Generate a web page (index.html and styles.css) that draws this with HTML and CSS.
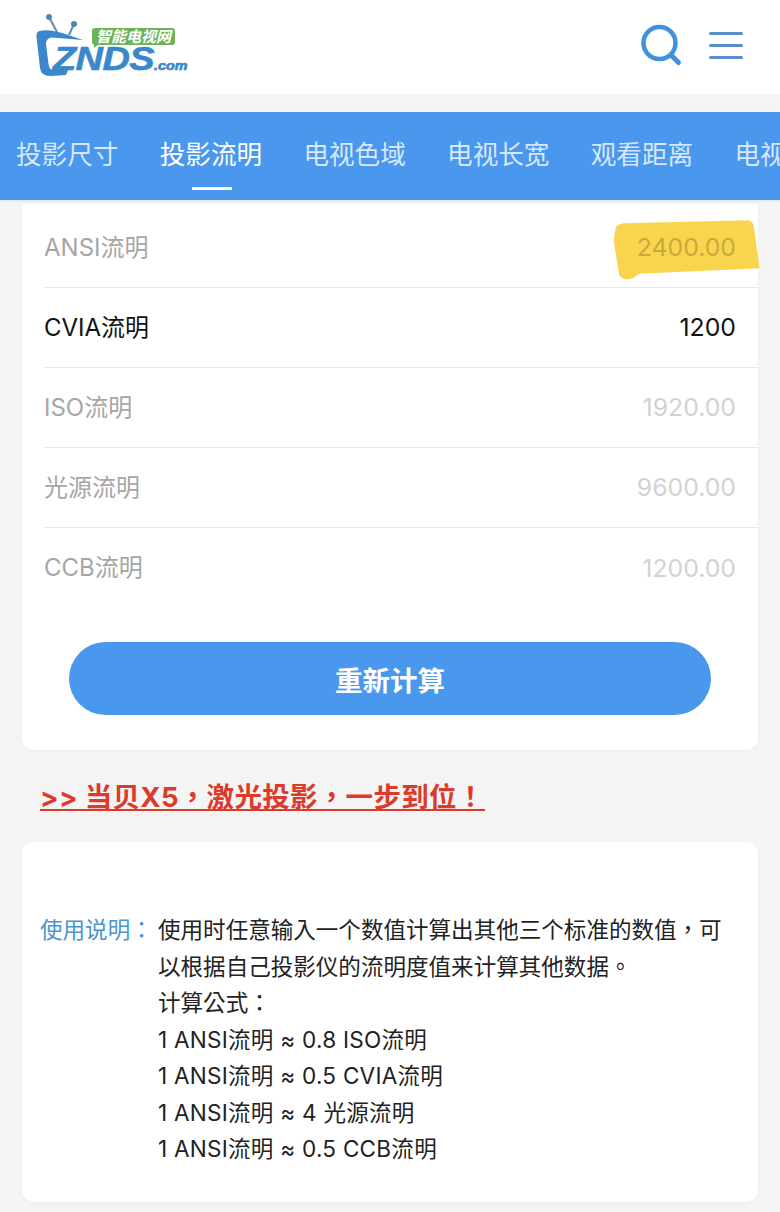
FILE: index.html
```html
<!DOCTYPE html>
<html lang="zh-CN">
<head>
    <meta charset="UTF-8"/>
    <title>投影流明换算</title>
    <link rel="stylesheet" href="styles.css">
</head>
<body>
    <header class="header">
        <div class="logo">
            <svg class="logo-tv" width="60" height="70" viewBox="0 0 60 70">
                <path d="M13 3 L21 18 M38 10 L33 21" stroke="#5a8fb5" stroke-width="2" fill="none"/>
                <circle cx="13" cy="3" r="3" fill="#4f86ad"/>
                <circle cx="38" cy="10" r="3" fill="#4f86ad"/>
                <path d="M4 17 Q0 17 0.500 23 L4 54 Q5 62 14 62 L30 61 L32 56 L18 56 Q13 56 12.500 50 L10 30 Q10 24 16 23.500 L47 26 L26 19 Q12 15 4 17 Z" fill="#3a87cb"/>
            </svg>
            <span class="logo-cn">智能电视网</span>
            <span class="logo-en">ZNDS<small>.com</small></span>
        </div>
        <div class="header-icons">
            <svg width="42" height="44" viewBox="0 0 42 44">
                <circle cx="18.500" cy="20" r="16" fill="none" stroke="#3f92dc" stroke-width="4.500"/>
                <path d="M30 32 L37.500 39.500" stroke="#3f92dc" stroke-width="5" stroke-linecap="round"/>
            </svg>
            <div class="menu-icon"><i></i><i></i><i></i></div>
        </div>
    </header>

    <nav class="tabs">
        <a class="tab">投影尺寸</a>
        <a class="tab active">投影流明</a>
        <a class="tab">电视色域</a>
        <a class="tab">电视长宽</a>
        <a class="tab">观看距离</a>
        <a class="tab">电视尺寸</a>
    </nav>

    <section class="card calc">
        <div class="row">
            <span class="row-label">ANSI流明</span>
            <span class="row-value marked">
                <svg class="marker" width="150" height="64" viewBox="156 78 450 192">
                    <path d="M170 110 Q178 98 195 97 L570 88 Q583 92 585 110 L602 232 L240 248 Q222 266 200 265 Q184 262 180 250 L164 150 Z" fill="#f9d54f"/>
                </svg>
                2400.00
            </span>
        </div>
        <div class="row current">
            <span class="row-label">CVIA流明</span>
            <span class="row-value">1200</span>
        </div>
        <div class="row">
            <span class="row-label">ISO流明</span>
            <span class="row-value">1920.00</span>
        </div>
        <div class="row">
            <span class="row-label">光源流明</span>
            <span class="row-value">9600.00</span>
        </div>
        <div class="row last">
            <span class="row-label">CCB流明</span>
            <span class="row-value">1200.00</span>
        </div>
        <button class="btn">重新计算</button>
    </section>

    <a class="promo" lang="zh-TW">&gt;&gt; 当贝X5，激光投影，一步到位！</a>

    <section class="card notes" lang="zh-TW">
        <div class="notes-title">使用说明：</div>
        <div class="notes-body">
            <p>使用时任意输入一个数值计算出其他三个标准的数值，可以根据自己投影仪的流明度值来计算其他数据。</p>
            <p>计算公式：</p>
            <p class="formula">1 ANSI流明 ≈ 0.8 ISO流明</p>
            <p class="formula">1 ANSI流明 ≈ 0.5 CVIA流明</p>
            <p class="formula">1 ANSI流明 ≈ 4 光源流明</p>
            <p class="formula">1 ANSI流明 ≈ 0.5 CCB流明</p>
        </div>
    </section>
</body>
</html>
```

FILE: styles.css
```css
* {
    margin: 0;
    padding: 0;
    box-sizing: border-box;
}
html, body {
    width: 780px;
    height: 1212px;
    overflow: hidden;
    background-color: #f4f4f4;
    font-family: "Inter", "Noto Sans CJK SC", sans-serif;
}
.header {
    height: 94px;
    background-color: #ffffff;
    display: flex;
    justify-content: space-between;
    align-items: center;
    padding: 0 36px;
}
.logo {
    position: relative;
    width: 152px;
    height: 64px;
}
.logo-tv {
    position: absolute;
    left: 0;
    top: -1px;
}
.logo-cn {
    position: absolute;
    left: 56px;
    top: 13px;
    width: 83px;
    height: 17px;
    border-radius: 3px;
    background-color: #6cb257;
    color: #ffffff;
    font-size: 15px;
    line-height: 17px;
    font-weight: 700;
    font-style: italic;
    text-align: center;
    white-space: nowrap;
}
.logo-cn::after {
    content: "";
    position: absolute;
    left: 2px;
    top: 16px;
    border-top: 4px solid #6cb257;
    border-right: 5px solid transparent;
}
.logo-en {
    position: absolute;
    left: 17px;
    top: 32px;
    color: #3a87cb;
    font-family: "Liberation Sans", sans-serif;
    font-size: 33px;
    line-height: 24px;
    font-weight: 700;
    font-style: italic;
    letter-spacing: -0.5px;
    white-space: nowrap;
    transform: scaleX(1.150);
    transform-origin: left center;
    -webkit-text-stroke: 0.6px #3a87cb;
}
.logo-en small {
    font-size: 12.500px;
    letter-spacing: 0;
}
.header-icons {
    display: flex;
    align-items: center;
    gap: 26px;
    padding-right: 1px;
    margin-bottom: 4px;
}
.menu-icon {
    width: 34px;
    display: flex;
    flex-direction: column;
    gap: 9px;
}
.menu-icon i {
    display: block;
    height: 3px;
    border-radius: 2px;
    background-color: #5a8ecb;
}
.tabs {
    height: 88px;
    margin-top: 18px;
    background-color: #4a98ee;
    display: flex;
    gap: 41.300px;
    padding-left: 16px;
    overflow: hidden;
    box-shadow: 0 1px 2px rgba(0, 0, 0, 0.08);
}
.tab {
    position: relative;
    flex-shrink: 0;
    color: rgba(255, 255, 255, 0.78);
    font-size: 25.600px;
    line-height: 86px;
    white-space: nowrap;
}
.tab.active {
    color: #ffffff;
}
.tab.active::after {
    content: "";
    position: absolute;
    left: 32px;
    bottom: 10px;
    width: 40px;
    height: 3px;
    background-color: #ffffff;
}
.card {
    background-color: #ffffff;
    margin: 0 22px;
    border-radius: 12px;
    box-shadow: 0 1px 2px rgba(0, 0, 0, 0.04);
}
.calc {
    height: 546px;
    margin-top: 4px;
    border-radius: 0 0 12px 12px;
    padding: 4px 0 0 22px;
}
.row {
    height: 80px;
    padding: 0 22px 5px 0;
    display: flex;
    justify-content: space-between;
    align-items: center;
    font-size: 24px;
    color: #a6a6a6;
    border-bottom: 1px solid #e8e8e8;
}
.row.last {
    border-bottom: none;
}
.row-value {
    padding-top: 4px;
    font-size: 24.800px;
    color: #d2d2d2;
}
.current,
.current .row-value {
    color: #111111;
}
.marked {
    position: relative;
    isolation: isolate;
    color: #c9a93e;
}
.marker {
    position: absolute;
    left: -26px;
    top: -11px;
    z-index: -1;
}
.btn {
    display: block;
    width: 642px;
    height: 73px;
    margin: 34px 0 0 25px;
    padding-top: 1px;
    border: none;
    border-radius: 37px;
    background-color: #4a98ee;
    color: #ffffff;
    font-family: inherit;
    font-size: 27.500px;
    font-weight: 700;
}
.promo {
    display: block;
    margin: 29px 0 0 40px;
    width: 445px;
    height: 32px;
    color: #dd3a2a;
    font-family: "Inter", "Noto Sans CJK TC", sans-serif;
    font-size: 27.500px;
    line-height: 37px;
    font-weight: 700;
    letter-spacing: 0.3px;
    white-space: nowrap;
    border-bottom: 2px solid #dd3a2a;
}
.notes {
    height: 360px;
    margin-top: 31px;
    padding: 70px 18px 0;
    display: flex;
    font-family: "Inter", "Noto Sans CJK TC", sans-serif;
    font-size: 22.560px;
    line-height: 36.500px;
    color: #222222;
}
.notes-title {
    flex-shrink: 0;
    width: 118px;
    color: #4a94cf;
}
.notes-body {
    flex: 1;
}
.formula {
    letter-spacing: 0.25px;
}
```
